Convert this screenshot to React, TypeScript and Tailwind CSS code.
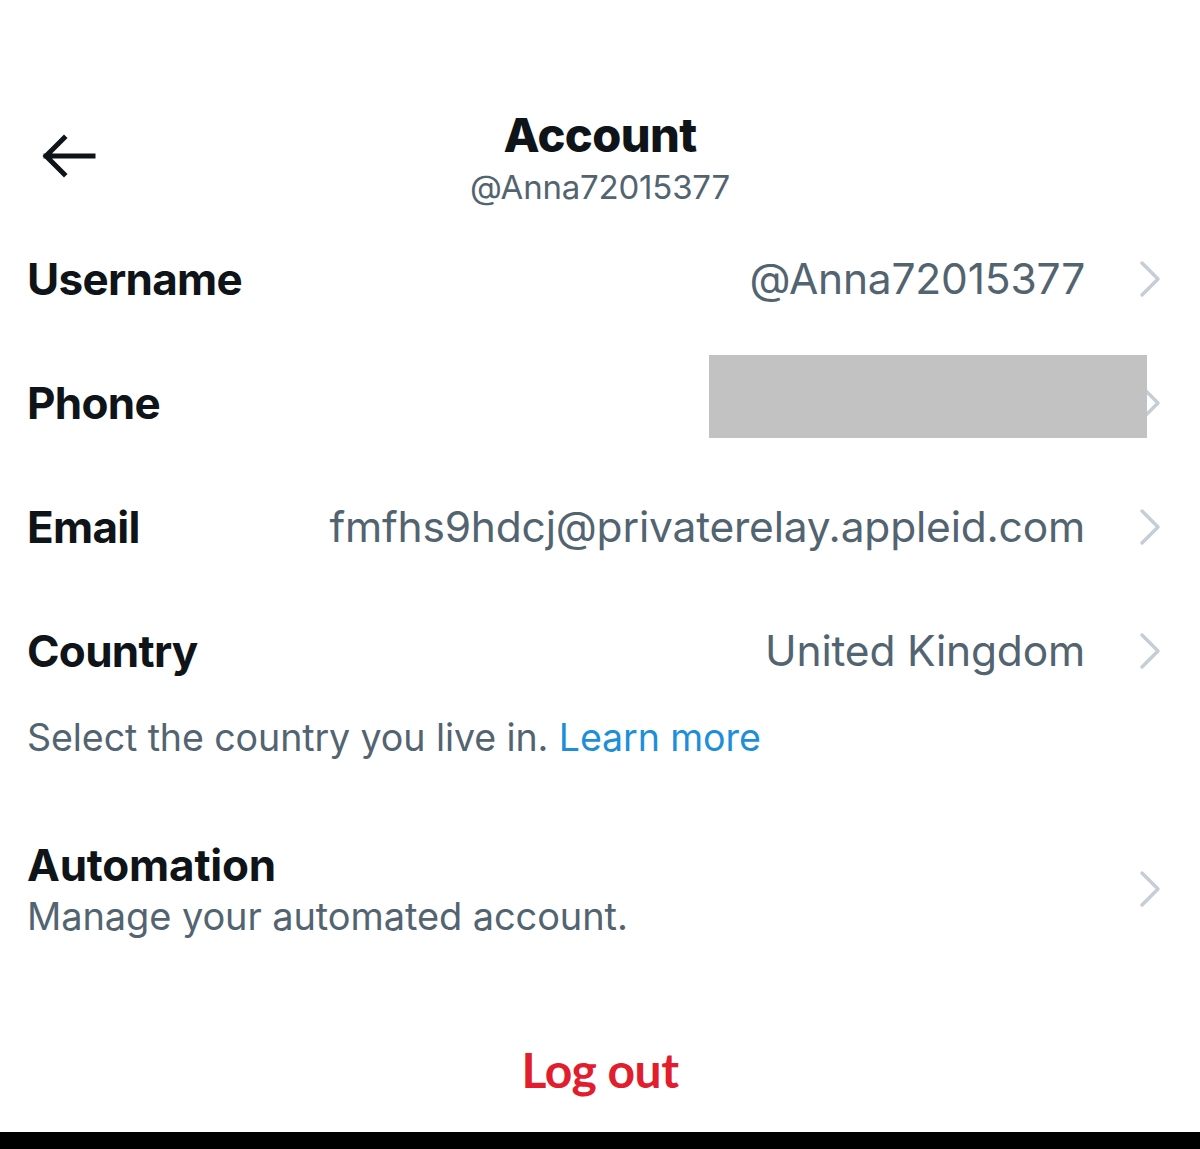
import React from "react";

const font = { fontFamily: "Inter, 'Noto Sans', sans-serif" };

function Chevron() {
  return (
    <svg width="22" height="38" viewBox="0 0 22 38" className="shrink-0">
      <path d="M3 3 L19 19 L3 35" fill="none" stroke="#c5ced4" strokeWidth="3.5" strokeLinecap="round" strokeLinejoin="round" />
    </svg>
  );
}

function Row({ label, value, redacted }: { label: string; value?: string; redacted?: boolean }) {
  return (
    <div className="relative flex h-[124px] items-center pl-[27px] pr-[39px]">
      <div className="text-[44px] font-bold tracking-[-0.7px] text-[#0f1419]">{label}</div>
      <div className="ml-auto text-right text-[42.5px] tracking-[-0.2px] text-[#536471]">{value}</div>
      <div className="ml-[54px]">
        <Chevron />
      </div>
      {redacted && <div className="absolute left-[709px] top-[14px] h-[83px] w-[438px] bg-[#c2c2c2]" />}
    </div>
  );
}

export default function App() {
  return (
    <div className="flex h-[1149px] w-[1200px] flex-col bg-white" style={font}>
      <div className="grid h-[217px] grid-cols-[1fr_auto_1fr] items-start pt-[108px]">
        <div className="pl-[42px] pt-[26px]">
          <svg width="54" height="44" viewBox="0 0 54 44">
            <path d="M22 4 L4 22 L22 40 M4 22 L51 22" fill="none" stroke="#0f1419" strokeWidth="5" strokeLinecap="square" />
          </svg>
        </div>
        <div className="flex flex-col items-center">
          <div className="text-[47px] font-extrabold leading-[54px] tracking-[-0.6px] text-[#0f1419]">Account</div>
          <div className="pt-[4px] text-[33px] leading-[42px] tracking-[-0.2px] text-[#536471]">@Anna72015377</div>
        </div>
        <div />
      </div>
      <Row label="Username" value="@Anna72015377" />
      <Row label="Phone" redacted />
      <Row label="Email" value="fmfhs9hdcj@privaterelay.appleid.com" />
      <Row label="Country" value="United Kingdom" />
      <div className="pl-[27px] text-[37.6px] leading-[50px] tracking-[-0.1px] text-[#536471]">
        Select the country you live in. <span className="text-[#1d8fd9]">Learn more</span>
      </div>
      <div className="mt-[75px] flex items-center pl-[27px] pr-[39px]">
        <div>
          <div className="text-[44px] font-bold leading-[54px] tracking-[-0.2px] text-[#0f1419]">Automation</div>
          <div className="text-[38px] leading-[48px] tracking-[-0.1px] text-[#536471]">Manage your automated account.</div>
        </div>
        <div className="ml-auto">
          <Chevron />
        </div>
      </div>
      <div className="mt-auto flex justify-center pb-[26px]">
        <div className="text-[48px] font-bold tracking-[-0.5px] text-[#e11d2e]" style={{ fontFamily: "Lato, 'Open Sans', sans-serif" }}>
          Log out
        </div>
      </div>
      <div className="h-[17px] bg-black" />
    </div>
  );
}
